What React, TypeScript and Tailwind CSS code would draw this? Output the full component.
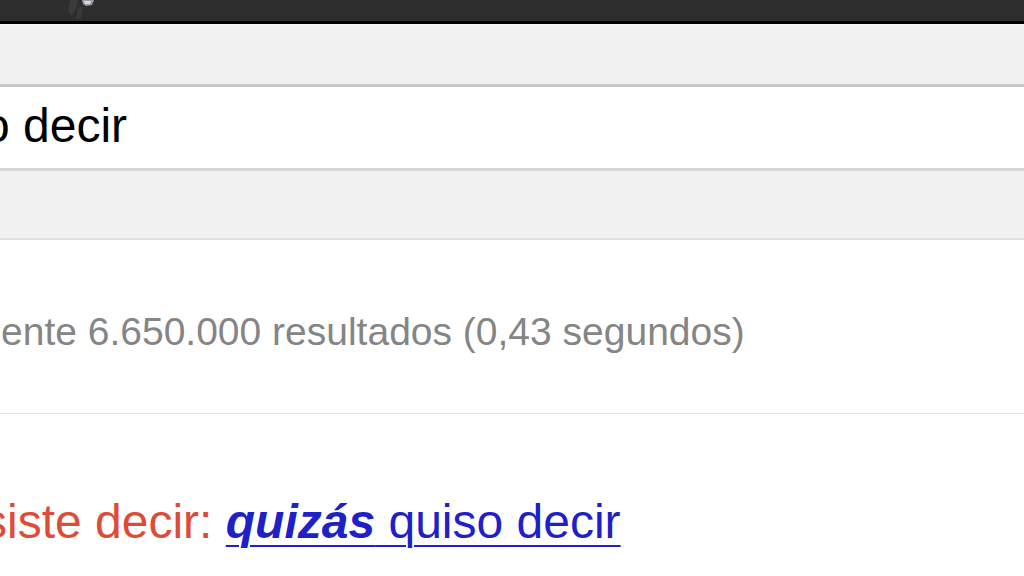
export default function App() {
  return (
    <div className="w-[1024px] h-[576px] overflow-hidden bg-white font-['Liberation_Sans',Arial,sans-serif]">
      {/* Top black bar */}
      <div className="relative h-[21px] bg-[#2d2d2d]">
        <svg className="absolute left-[64px] top-0" width="34" height="21" viewBox="0 0 34 21">
          <path d="M6 0 L14 0 L12 8 L8 16 L4 12 Z" fill="#3a3a3a" />
          <path d="M18 0 L30 0 L28 5 L22 6 L19 4 Z" fill="#9a9aa4" />
          <path d="M20 1 L27 1 L26 4 L21 4 Z" fill="#d8d8de" />
          <path d="M13 8 L19 6 L17 18 L12 20 Z" fill="#383838" />
        </svg>
      </div>
      <div className="h-[3px] bg-black" />

      {/* Search bar band */}
      <div className="h-[63px] bg-[#f1f1f1] border-t border-[#f7f7f7] border-b-[3px] border-b-[#c8c8c8]" />

      {/* Query */}
      <div className="h-[81px] bg-white pt-[11px] overflow-hidden whitespace-nowrap">
        <div className="ml-[-17px] text-[48px] leading-[56px] text-black">o decir</div>
      </div>

      {/* Tabs band */}
      <div className="h-[72px] bg-[#f1f1f1] border-t-[3px] border-t-[#d6d6d6] border-b-[2px] border-b-[#e2e2e2]" />

      {/* Result stats */}
      <div className="pt-[70px] whitespace-nowrap">
        <div className="ml-[1px] text-[39px] leading-[44px] text-[#858585]">
          ente 6.650.000 resultados (0,43 segundos)
        </div>
      </div>
      <div className="mt-[59px] h-px bg-[#e2e2e2]" />

      {/* Did you mean */}
      <div className="pt-[80px] whitespace-nowrap">
        <div className="ml-[-17px] text-[48px] leading-[56px]">
          <span className="text-[#dd4b39]">siste decir: </span>
          <a href="#" className="text-[#2020c8] underline decoration-2 underline-offset-[7px]">
            <b className="italic">quizás</b> quiso decir
          </a>
        </div>
      </div>
    </div>
  );
}
